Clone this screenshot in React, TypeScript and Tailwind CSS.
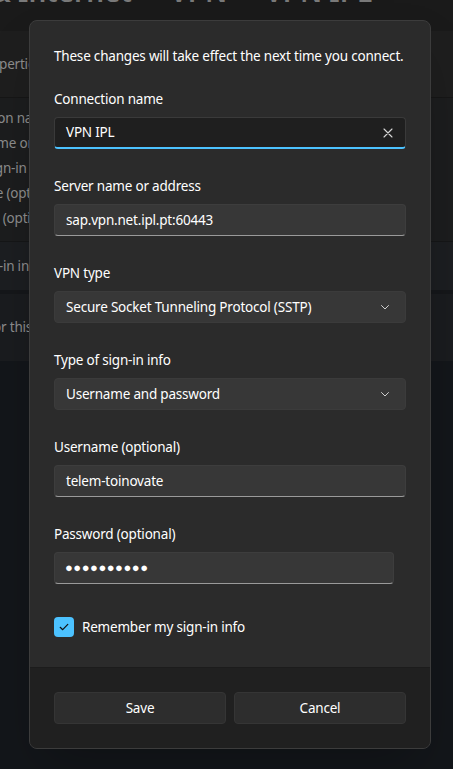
import React from 'react';

const font = { fontFamily: '"Segoe UI", "Noto Sans", "Open Sans", sans-serif' };

const Chevron = () => (
  <svg width="12" height="12" viewBox="0 0 12 12" fill="none">
    <path d="M2.5 4.5 6 8l3.5-3.5" stroke="#cfcfcf" strokeWidth="1" strokeLinecap="round" strokeLinejoin="round" />
  </svg>
);

const Field = ({ label, children }: { label: string; children: React.ReactNode }) => (
  <div className="flex flex-col">
    <div className="text-[13.5px] tracking-[-0.2px] leading-[20px] text-white mb-[8px]">{label}</div>
    {children}
  </div>
);

const TextBox = ({ value, className = '' }: { value: string; className?: string }) => (
  <div className={`h-[32px] rounded-[4px] bg-[#373737] border border-[#3d3d3d] border-b-[#9a9a9a] flex items-center px-[11px] text-[13.5px] tracking-[-0.2px] text-white ${className}`}>
    {value}
  </div>
);

const Select = ({ value }: { value: string }) => (
  <div className="h-[32px] rounded-[4px] bg-[#373737] border border-[#3b3b3b] flex items-center justify-between pl-[11px] pr-[14px] text-[13.5px] tracking-[-0.2px] text-white">
    <span>{value}</span>
    <Chevron />
  </div>
);

export default function App() {
  return (
    <div className="relative w-[453px] h-[769px] overflow-hidden bg-[#13161a]" style={font}>
      {/* settings page behind the dialog */}
      <div className="h-[31px] bg-[#1a1a1a] overflow-hidden">
        <div className="flex items-start mt-[-29px] text-[28px] leading-[40px] font-semibold text-[#7a7a7a] whitespace-nowrap">
          <span className="w-[170px] shrink-0 ml-[-10px]">&amp; Internet</span>
          <span className="w-[95px] shrink-0 ml-[10px]">VPN</span>
          <span className="shrink-0">VPN IPL</span>
        </div>
      </div>
      <div className="h-[67px] bg-[#1e1e1e] border-b border-[#161616] flex items-center">
        <span className="ml-[-22px] text-[13.5px] tracking-[-0.2px] text-[#8d8d8d]">Properties</span>
      </div>
      <div className="h-[144px] bg-[#1c1d1e] border-b border-[#151617] flex flex-col pt-[8px] text-[13.5px] tracking-[-0.2px] leading-[25px] text-[#8d8d8d]">
        <span className="ml-[-57px]">Connection name</span>
        <span className="ml-[-62px]">Server name or address</span>
        <span className="ml-[-63px]">Type of sign-in info</span>
        <span className="ml-[-61px]">Username (optional)</span>
        <span className="ml-[-60px]">Password (optional)</span>
      </div>
      <div className="h-[52px] bg-[#1c1e21] border-b-[4px] border-[#15171a] flex items-center">
        <span className="ml-[-28px] text-[13.5px] tracking-[-0.2px] text-[#8d8d8d]">Sign-in info</span>
      </div>
      <div className="h-[67px] bg-[#1a1c1f] flex items-center">
        <span className="ml-[-38px] text-[13.5px] tracking-[-0.2px] text-[#8d8d8d]">Use for this</span>
      </div>

      {/* dialog */}
      <div className="absolute left-[29px] top-[20px] w-[402px] h-[729px] rounded-[8px] border border-[#3c3c3c] bg-[#2b2b2b] overflow-hidden flex flex-col shadow-2xl">
        <div className="flex-1 px-[24px] pt-[25px]">
          <p className="text-[13.5px] tracking-[-0.2px] leading-[20px] text-white whitespace-nowrap">These changes will take effect the next time you connect.</p>
          <div className="mt-[23px] flex flex-col gap-[27px]">
            <Field label="Connection name">
              <div className="h-[32px] rounded-[4px] bg-[#1f1f1f] border border-[#3a3a3a] border-b-2 border-b-[#4cc2ff] flex items-center justify-between pl-[11px] pr-[12px] text-[13.5px] tracking-[-0.2px] text-white">
                <span>VPN IPL</span>
                <svg width="10" height="10" viewBox="0 0 10 10">
                  <path d="M1 1l8 8M9 1 1 9" stroke="#d6d6d6" strokeWidth="1.1" strokeLinecap="round" />
                </svg>
              </div>
            </Field>
            <Field label="Server name or address">
              <TextBox value="sap.vpn.net.ipl.pt:60443" />
            </Field>
            <Field label="VPN type">
              <Select value="Secure Socket Tunneling Protocol (SSTP)" />
            </Field>
            <Field label="Type of sign-in info">
              <Select value="Username and password" />
            </Field>
            <Field label="Username (optional)">
              <TextBox value="telem-toinovate" />
            </Field>
            <Field label="Password (optional)">
              <TextBox value="●●●●●●●●●●" className="w-[340px] !tracking-[0.5px] pl-[10px] !text-[13px]" />
            </Field>
          </div>
          <div className="mt-[33px] flex items-center gap-[8px]">
            <div className="w-[20px] h-[20px] rounded-[4px] bg-[#4cc2ff] flex items-center justify-center">
              <svg width="12" height="12" viewBox="0 0 12 12" fill="none">
                <path d="M2.2 6.3 4.7 8.7 9.8 3.4" stroke="#111" strokeWidth="1.2" strokeLinecap="round" strokeLinejoin="round" />
              </svg>
            </div>
            <span className="text-[13.5px] tracking-[-0.2px] leading-[20px] text-white">Remember my sign-in info</span>
          </div>
        </div>
        <div className="h-[81px] bg-[#202020] border-t border-[#1c1c1c] px-[24px] flex items-center gap-[8px]">
          <button className="flex-1 h-[32px] rounded-[4px] bg-[#2d2d2d] border border-[#353535] text-[13.5px] tracking-[-0.2px] text-white">Save</button>
          <button className="flex-1 h-[32px] rounded-[4px] bg-[#2d2d2d] border border-[#353535] text-[13.5px] tracking-[-0.2px] text-white">Cancel</button>
        </div>
      </div>
    </div>
  );
}
